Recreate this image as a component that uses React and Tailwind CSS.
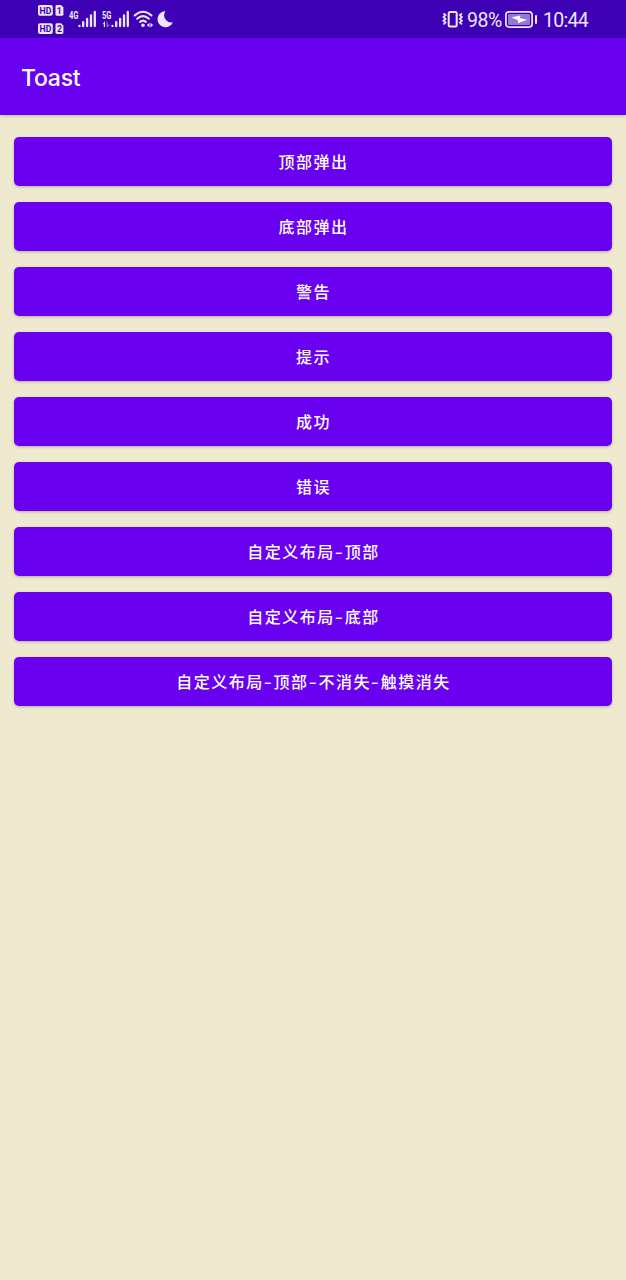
import { Fragment } from 'react';

const labels = ['顶部弹出', '底部弹出', '警告', '提示', '成功', '错误', '自定义布局-顶部', '自定义布局-底部', '自定义布局-顶部-不消失-触摸消失'];

function SimIcons() {
  return (
    <svg className="h-[38px] w-[27px]" viewBox="0 0 27 38" fontFamily="Roboto, sans-serif" fontWeight="700" fill="#3b00b4">
      <g fill="#eee6ff">
        <rect x="1" y="5" width="14.8" height="10.8" rx="2" />
        <path d="M20 5h4l2.4 2.4v7q0 1.4-1.4 1.4h-5q-1.5 0-1.5-1.4V6.4Q18.5 5 20 5z" />
        <rect x="1" y="23.2" width="14.8" height="10.8" rx="2" />
        <path d="M20 23.2h4l2.4 2.4v7q0 1.4-1.4 1.4h-5q-1.5 0-1.5-1.4v-8q0-1.4 1.5-1.4z" />
      </g>
      <text x="2.5" y="13.9" fontSize="9.8" textLength="11.8" lengthAdjust="spacingAndGlyphs">HD</text>
      <text x="19.8" y="13.9" fontSize="9.5" textLength="5" lengthAdjust="spacingAndGlyphs">1</text>
      <text x="2.5" y="32.1" fontSize="9.8" textLength="11.8" lengthAdjust="spacingAndGlyphs">HD</text>
      <text x="19.9" y="32.1" fontSize="9.5" textLength="5" lengthAdjust="spacingAndGlyphs">2</text>
    </svg>
  );
}

function Signal({ label, data }) {
  return (
    <svg className="h-[38px] w-[28px]" viewBox="0 0 28 38" fill="#eee6ff">
      <text x="0" y="18.5" fontFamily="Roboto, sans-serif" fontWeight="700" fontSize="10" textLength="9.5" lengthAdjust="spacingAndGlyphs">{label}</text>
      <path d="M10.5 25.8v.3M14.2 22.2v4M18.1 19v7.1M22 15.5v10.6M25.8 12v14.1" stroke="#eee6ff" strokeWidth="2.3" strokeLinecap="round" />
      {data && (
        <>
          <path d="M.5 23.7 3 21.2V27H1.8v-3.3z" />
          <path opacity=".45" d="M4.5 21.5h1.2v3.2H8l-2.7 2.8-.8-.8z" />
        </>
      )}
    </svg>
  );
}

function Wifi() {
  return (
    <svg className="h-[38px] w-[21px]" viewBox="0 0 21 38" fill="none" stroke="#eee6ff" strokeWidth="2.1" strokeLinecap="round">
      <path d="M1.7 15.5Q10 8 18.5 15.5M4.2 18.7Q10 13.5 15.8 18.7M7.1 21.9Q10 19.3 12.9 21.9" />
      <circle cx="10" cy="25.2" r="1.8" fill="#eee6ff" stroke="none" />
      <path d="m16.5 22.7-2.6 2.4 2.6 2.4zM17.5 22.7l2.6 2.4-2.6 2.4z" fill="#eee6ff" stroke="none" />
    </svg>
  );
}

function Moon() {
  return (
    <svg className="h-[38px] w-[16px]" viewBox="0 0 16 38" fill="#eee6ff">
      <path d="M7.5 11.3A8 8 0 1 0 15.9 22.3Q12 23.3 9.2 20.2C6.7 17.5 6.4 14.5 8.3 11.5Q8.3 11.1 7.5 11.3Z" />
    </svg>
  );
}

function Vibrate() {
  return (
    <svg className="h-[38px] w-[21px]" viewBox="0 0 21 38" fill="none" stroke="#eee6ff" strokeWidth="2">
      <rect x="6.7" y="12" width="8" height="14.5" rx="1.5" />
      <path d="m1.5 13.3 2 1.8-2 1.9 2 1.9-2 1.8 2 1.8-2 1.8M19.9 13.3l-2 1.8 2 1.9-2 1.9 2 1.8-2 1.8 2 1.8" strokeWidth="1.8" />
    </svg>
  );
}

function Battery() {
  return (
    <svg className="h-[38px] w-[33px]" viewBox="0 0 33 38">
      <rect x=".9" y="11.9" width="26.2" height="15.2" rx="3" fill="none" stroke="#eee6ff" strokeWidth="1.7" />
      <rect x="3" y="14" width="22" height="11" rx="1" fill="#9478d8" />
      <path d="M6.5 17.3 15.5 15.6 14.9 18.2 22.2 19.8 12.8 23.3 13.3 20.4Z" fill="#fff" />
      <path d="M31 16v7" stroke="#eee6ff" strokeWidth="2" strokeLinecap="round" />
    </svg>
  );
}

function ButtonLabel({ text }) {
  return text.split('-').map((part, index) => (
    <Fragment key={index}>
      {index > 0 && <span className="inline-block w-[9.9px] pr-[2px] text-center tracking-normal"><span className="inline-block scale-x-[1.4]">-</span></span>}
      {part}
    </Fragment>
  ));
}

export default function App() {
  return (
    <div className="flex min-h-[1280px] w-full flex-col bg-[#efe9d0]">
      <div className="flex h-[38px] items-center bg-[#3d00b5] px-[37px] font-['Roboto',sans-serif] text-[#eee6ff]">
        <SimIcons />
        <div className="ml-[5px] flex"><Signal label="4G" /></div>
        <div className="ml-[5px] flex"><Signal label="5G" data /></div>
        <div className="ml-[3px] flex"><Wifi /></div>
        <div className="ml-[3px] flex"><Moon /></div>
        <div className="ml-auto flex items-center">
          <Vibrate />
          <span className="ml-[4px] mt-[3px] w-[38px] whitespace-nowrap text-[19.5px] leading-[22px] tracking-[-0.5px]">98%</span>
          <Battery />
          <span className="ml-[5px] mt-[3px] w-[46px] whitespace-nowrap text-[19.5px] leading-[22px] tracking-[-0.7px]">10:44</span>
        </div>
      </div>
      <header className="flex h-[76.5px] items-center bg-[#6900ef] pl-[21px] pt-[3px] shadow-[0_1px_3px_rgba(0,0,0,0.2)]">
        <h1 className="font-['Inter',sans-serif] text-[23px] font-medium leading-[30px] tracking-[-0.25px] text-white">Toast</h1>
      </header>
      <main className="flex flex-col gap-4 px-[14px] pt-[22.2px]">
        {labels.map((label) => (
          <button key={label} className="flex h-[49px] items-center justify-center rounded-[5px] bg-[#6900ef] pb-[1px] pl-px font-['Noto_Sans_CJK_SC',sans-serif] text-[16px] font-medium tracking-[1.5px] text-white shadow-[0_1px_3px_rgba(0,0,0,0.25)]">
            <span className="whitespace-nowrap"><ButtonLabel text={label} /></span>
          </button>
        ))}
      </main>
    </div>
  );
}
